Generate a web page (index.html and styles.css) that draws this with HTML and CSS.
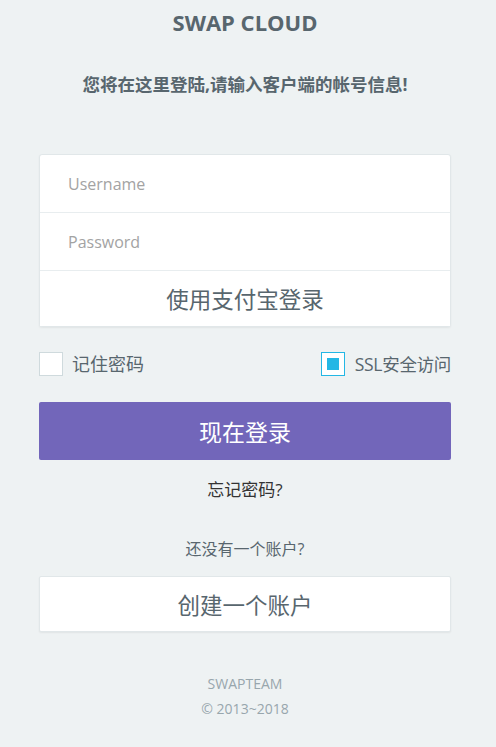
FILE: index.html
```html
<!DOCTYPE html>
<html lang="zh-CN">
<head>
    <meta charset="UTF-8">
    <meta name="viewport" content="width=device-width, initial-scale=1.0">
    <title>SWAP CLOUD</title>
    <link rel="stylesheet" href="styles.css">
</head>
<body>

    <div class="page">
        <h1 class="brand">SWAP CLOUD</h1>
        <p class="subtitle">您将在这里登陆,请输入客户端的帐号信息!</p>

        <!-- Login box -->
        <div class="login-card">
            <input class="field" type="text" placeholder="Username">
            <input class="field" type="password" placeholder="Password">
            <button class="alipay-btn" type="button">使用支付宝登录</button>
        </div>

        <div class="options">
            <label class="check">
                <span class="box"></span>
                记住密码
            </label>
            <label class="check ssl">
                <span class="box checked"></span>
                SSL安全访问
            </label>
        </div>

        <button class="login-btn" type="button">现在登录</button>

        <p class="forgot">忘记密码?</p>

        <p class="no-account">还没有一个账户?</p>
        <button class="create-btn" type="button">创建一个账户</button>

        <div class="footer">
            <p>SWAPTEAM</p>
            <p>&copy; 2013~2018</p>
        </div>
    </div>

</body>
</html>
```

FILE: styles.css
```css
body {
    margin: 0;
    background-color: #eef2f3;
    font-family: 'Open Sans', 'Noto Sans CJK SC', sans-serif;
    color: #58666e;
}

.page {
    width: 412px;
    margin: 0 0 0 39px;
    padding-top: 9px;
    text-align: center;
}

.brand {
    margin: 0;
    font-size: 22px;
    line-height: 26px;
    font-weight: 700;
    color: #58666e;
}

.subtitle {
    margin: 39px 0 0;
    font-size: 17.5px;
    line-height: 20px;
    font-weight: 700;
    color: #58666e;
}

/* Login box */
.login-card {
    margin-top: 60px;
    background-color: #fff;
    border: 1px solid #e1e7e9;
    border-radius: 3px;
    box-shadow: 0 1px 2px rgba(0, 0, 0, 0.06);
    display: flex;
    flex-direction: column;
}

.field {
    height: 58px;
    border: none;
    border-bottom: 1px solid #e8edef;
    padding: 0 28px;
    font-family: inherit;
    font-size: 16px;
    color: #58666e;
    background: transparent;
    outline: none;
    box-sizing: border-box;
}

.field::placeholder {
    color: #a3a3a3;
}

.alipay-btn {
    height: 55px;
    border: none;
    background: #fff;
    font-family: inherit;
    font-size: 22.5px;
    color: #58666e;
    cursor: pointer;
}

.options {
    margin-top: 25px;
    display: flex;
    justify-content: space-between;
    align-items: center;
}

.check {
    display: flex;
    align-items: center;
    gap: 9px;
    font-size: 18px;
    line-height: 24px;
    color: #58666e;
}

.check.ssl {
    gap: 10px;
    font-size: 17.5px;
    letter-spacing: -0.3px;
}

.box {
    width: 24px;
    height: 24px;
    box-sizing: border-box;
    border: 1px solid #cfdadd;
    background: #fff;
    display: flex;
    align-items: center;
    justify-content: center;
}

.box.checked {
    border-color: #23b7e5;
}

.box.checked::after {
    content: "";
    width: 12px;
    height: 12px;
    background: #23b7e5;
}

.login-btn {
    display: block;
    width: 100%;
    height: 58px;
    margin-top: 26px;
    border: none;
    border-radius: 2px;
    background-color: #7266ba;
    color: #fff;
    font-family: inherit;
    font-size: 23px;
    cursor: pointer;
}

.forgot {
    margin: 20px 0 0;
    font-size: 17px;
    line-height: 20px;
    color: #333;
}

.no-account {
    margin: 39px 0 0;
    font-size: 16px;
    line-height: 20px;
    color: #58666e;
}

.create-btn {
    display: block;
    width: 100%;
    height: 56px;
    margin-top: 17px;
    border: 1px solid #e1e7e9;
    border-radius: 2px;
    box-shadow: 0 1px 2px rgba(0, 0, 0, 0.06);
    background: #fff;
    font-family: inherit;
    font-size: 22.5px;
    color: #58666e;
    cursor: pointer;
}

.footer {
    margin-top: 39px;
    font-size: 14px;
    line-height: 25px;
    color: #98a6ad;
}

.footer p {
    margin: 0;
}
```
